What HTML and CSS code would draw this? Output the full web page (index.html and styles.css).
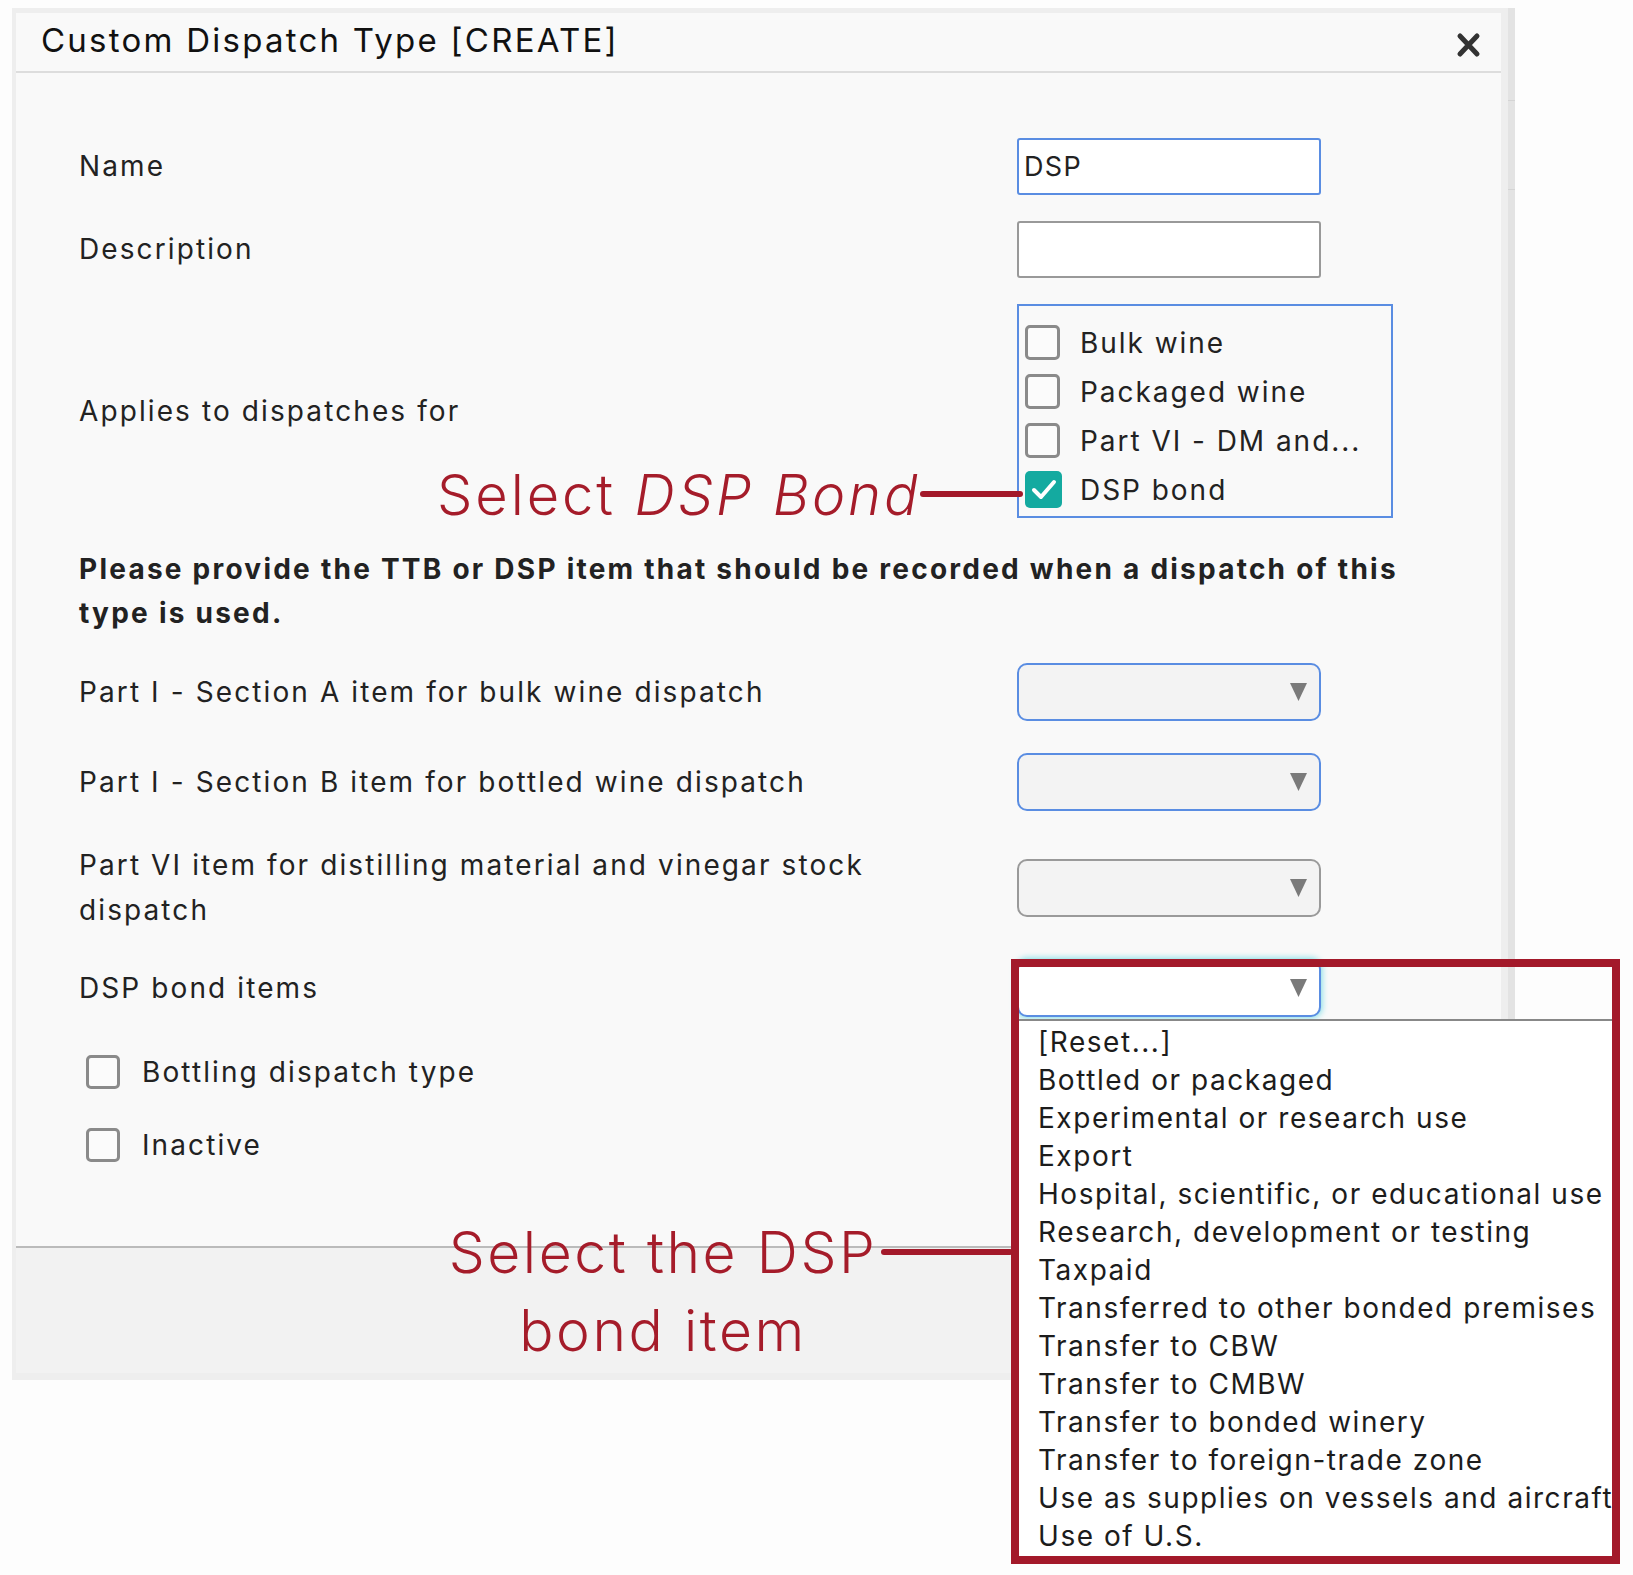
FILE: index.html
```html
<!DOCTYPE html>
<html lang="en">

<head>
    <meta charset="UTF-8">
    <meta name="viewport" content="width=device-width, initial-scale=1.0">
    <title>Custom Dispatch Type [CREATE]</title>

    <link rel="stylesheet" href="styles.css">
</head>

<body>
    <div class="frame">
        <div class="modal">
            <div class="modal-header">
                <h2 class="modal-title">Custom Dispatch Type [CREATE]</h2>
                <button class="close-button" type="button">
                    <svg width="25" height="26" viewBox="0 0 25 26">
                        <path d="M4 4 L21 22 M21 4 L4 22" stroke="#333" stroke-width="5" stroke-linecap="round" fill="none"/>
                    </svg>
                </button>
            </div>

            <div class="modal-body">
                <div class="form-row">
                    <span class="form-label">Name</span>
                    <div class="text-input focused">DSP</div>
                </div>
                <div class="form-row">
                    <span class="form-label">Description</span>
                    <div class="text-input"></div>
                </div>
                <div class="form-row">
                    <span class="form-label">Applies to dispatches for</span>
                    <div class="check-group">
                        <div class="check-item"><span class="check-box"></span>Bulk wine</div>
                        <div class="check-item"><span class="check-box"></span>Packaged wine</div>
                        <div class="check-item"><span class="check-box"></span>Part VI - DM and...</div>
                        <div class="check-item">
                            <span class="check-box checked">
                                <svg width="37" height="37" viewBox="0 0 37 37">
                                    <path d="M9 19 L16 26 L29 11" stroke="#fff" stroke-width="4" stroke-linecap="round" stroke-linejoin="round" fill="none"/>
                                </svg>
                            </span>DSP bond
                        </div>
                    </div>
                </div>

                <p class="form-hint">Please provide the TTB or DSP item that should be recorded when a dispatch of this type is used.</p>

                <div class="form-row select-row">
                    <span class="form-label">Part I - Section A item for bulk wine dispatch</span>
                    <div class="select-box focused">
                        <svg class="select-arrow" width="17" height="18" viewBox="0 0 17 18"><polygon points="0,0 17,0 8.5,18" fill="#7a7a7a"/></svg>
                    </div>
                </div>
                <div class="form-row select-row">
                    <span class="form-label">Part I - Section B item for bottled wine dispatch</span>
                    <div class="select-box focused">
                        <svg class="select-arrow" width="17" height="18" viewBox="0 0 17 18"><polygon points="0,0 17,0 8.5,18" fill="#7a7a7a"/></svg>
                    </div>
                </div>
                <div class="form-row select-row short-gap">
                    <span class="form-label">Part VI item for distilling material and vinegar stock dispatch</span>
                    <div class="select-box">
                        <svg class="select-arrow" width="17" height="18" viewBox="0 0 17 18"><polygon points="0,0 17,0 8.5,18" fill="#7a7a7a"/></svg>
                    </div>
                </div>
                <div class="form-row last-row">
                    <span class="form-label">DSP bond items</span>
                    <div class="select-box open">
                        <svg class="select-arrow" width="17" height="18" viewBox="0 0 17 18"><polygon points="0,0 17,0 8.5,18" fill="#7a7a7a"/></svg>
                    </div>
                </div>

                <div class="check-line first"><span class="check-box"></span>Bottling dispatch type</div>
                <div class="check-line"><span class="check-box"></span>Inactive</div>
            </div>

            <div class="modal-footer"></div>
        </div>
        <div class="scrollbar"><div class="scrollbar-thumb"></div></div>
    </div>

    <!-- open list of the DSP bond items select -->
    <div class="highlight-box">
        <ul class="option-list">
            <li>[Reset...]</li>
            <li>Bottled or packaged</li>
            <li>Experimental or research use</li>
            <li>Export</li>
            <li>Hospital, scientific, or educational use</li>
            <li>Research, development or testing</li>
            <li>Taxpaid</li>
            <li>Transferred to other bonded premises</li>
            <li>Transfer to CBW</li>
            <li>Transfer to CMBW</li>
            <li>Transfer to bonded winery</li>
            <li>Transfer to foreign-trade zone</li>
            <li>Use as supplies on vessels and aircrafts</li>
            <li>Use of U.S.</li>
        </ul>
    </div>

    <!-- annotations -->
    <div class="callout callout-bond">Select <em>DSP Bond</em></div>
    <div class="pointer pointer-bond"></div>
    <div class="callout callout-item">Select the DSP<br>bond item</div>
    <div class="pointer pointer-item"></div>
</body>

</html>
```

FILE: styles.css
```css
body {
    margin: 0;
    padding: 8px 0 0 12px;
    background-color: #fdfdfd;
    font-family: Inter, "Noto Sans", sans-serif;
    color: #222;
}

.frame {
    display: flex;
    width: 1503px;
    box-sizing: border-box;
    padding: 5px 0 7px 4px;
    background-color: #eee;
}

.modal {
    width: 1485px;
    background-color: #f9f9f9;
}

.modal-header {
    display: flex;
    justify-content: space-between;
    align-items: flex-start;
    height: 58px;
    padding: 0 20px 0 25px;
    border-bottom: 2px solid #ddd;
}

.modal-title {
    margin: 0;
    font-size: 33px;
    font-weight: 400;
    line-height: 54px;
    letter-spacing: 0.068em;
    color: #111;
}

.close-button {
    margin-top: 19px;
    padding: 0;
    border: none;
    background: none;
    line-height: 0;
    filter: blur(0.4px);
}

.modal-body {
    padding: 65px 0 79px 63px;
}

.form-row {
    display: grid;
    grid-template-columns: 850px auto;
    column-gap: 88px;
    align-items: center;
    margin-bottom: 26px;
}

.form-row.select-row {
    margin-bottom: 32px;
}

.form-row.short-gap {
    margin-bottom: 26px;
}

.form-row.last-row {
    margin-bottom: 0;
}

.form-label {
    font-size: 28px;
    line-height: 45px;
    letter-spacing: 0.075em;
}

.text-input {
    width: 304px;
    height: 57px;
    box-sizing: border-box;
    padding-left: 5px;
    border: 2px solid #999;
    border-radius: 3px;
    background-color: #fff;
    font-size: 27px;
    line-height: 53px;
    letter-spacing: 0.05em;
}

.text-input.focused {
    border-color: #5a8de2;
}

.check-group {
    width: 376px;
    box-sizing: border-box;
    padding: 12px 0 2px 6px;
    border: 2px solid #5a8de2;
}

.check-item {
    display: flex;
    align-items: center;
    height: 49px;
    font-size: 28px;
    letter-spacing: 0.07em;
}

.check-box {
    flex-shrink: 0;
    width: 35px;
    height: 35px;
    box-sizing: border-box;
    margin-right: 20px;
    border: 3px solid #8a8a8a;
    border-radius: 5px;
    background-color: #fbfbfb;
}

.check-box.checked {
    width: 37px;
    height: 37px;
    margin-right: 18px;
    border: none;
    background-color: #14aaa0;
}

.check-box svg {
    display: block;
}

.form-hint {
    margin: 29px 0 28px;
    padding-right: 60px;
    font-size: 28px;
    font-weight: 700;
    line-height: 44px;
    letter-spacing: 0.08em;
}

.select-box {
    position: relative;
    width: 304px;
    height: 58px;
    box-sizing: border-box;
    border: 2px solid #9a9a9a;
    border-radius: 10px;
    background-color: #f3f3f3;
}

.select-box.focused {
    border-color: #5a8de2;
}

.select-box.open {
    border-color: #5a8de2;
    background-color: #fff;
    box-shadow: 0 0 6px 1px #7fdde6;
}

.select-arrow {
    position: absolute;
    right: 12px;
    top: 18px;
}

.check-line {
    display: flex;
    align-items: center;
    height: 45px;
    margin-top: 28px;
    padding-left: 7px;
    font-size: 28px;
    letter-spacing: 0.075em;
}

.check-line.first {
    margin-top: 32px;
}

.check-line .check-box {
    width: 34px;
    height: 34px;
    margin-right: 22px;
}

.modal-footer {
    height: 125px;
    border-top: 2px solid #bbb;
    background-color: #f2f2f2;
}

.scrollbar {
    width: 7px;
    margin: -5px 0 -7px 7px;
    background-color: #e3e3e3;
}

.scrollbar-thumb {
    height: 88px;
    margin-top: 92px;
    border-top: 1px solid #d4d4d4;
    border-bottom: 1px solid #d4d4d4;
}

.highlight-box {
    position: absolute;
    left: 1011px;
    top: 959px;
    width: 609px;
    height: 605px;
    box-sizing: border-box;
    border: 8px solid #a3192a;
}

.option-list {
    position: absolute;
    left: 0;
    right: 0;
    top: 52px;
    bottom: 0;
    margin: 0;
    padding: 2px 0 0 19px;
    list-style: none;
    overflow: hidden;
    white-space: nowrap;
    border-top: 2px solid #888;
    background-color: #fff;
    font-size: 28px;
    line-height: 38px;
    letter-spacing: 0.055em;
    color: #1c1c1c;
}

.callout {
    position: absolute;
    color: #a51c2a;
    font-weight: 300;
    white-space: nowrap;
}

.callout em {
    font-style: italic;
}

.callout-bond {
    left: 437px;
    top: 467px;
    font-size: 56px;
    line-height: 56px;
    letter-spacing: 0.052em;
}

.callout-item {
    left: 363px;
    top: 1214px;
    width: 600px;
    text-align: center;
    font-size: 57px;
    line-height: 78px;
    letter-spacing: 0.045em;
}

.pointer {
    position: absolute;
    height: 6px;
    border-radius: 3px;
    background-color: #a3192a;
}

.pointer-bond {
    left: 920px;
    top: 491px;
    width: 103px;
}

.pointer-item {
    left: 881px;
    top: 1249px;
    width: 132px;
}
```
